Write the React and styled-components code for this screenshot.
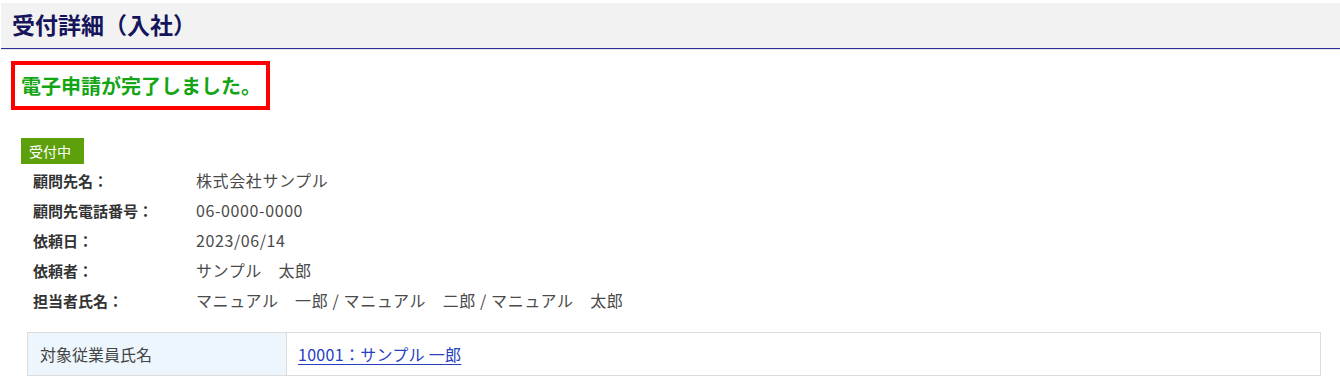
import { Fragment } from "react"
import styled, { createGlobalStyle } from "styled-components"

const GlobalStyle = createGlobalStyle`
  body {
    margin: 0;
    background: #fff;
    font-family: "Noto Sans CJK JP", "Noto Sans", sans-serif;
    color: #333;
  }
`

const details = [
  { label: "顧問先名：", value: "株式会社サンプル" },
  { label: "顧問先電話番号：", value: "06-0000-0000" },
  { label: "依頼日：", value: "2023/06/14" },
  { label: "依頼者：", value: "サンプル　太郎" },
  { label: "担当者氏名：", value: "マニュアル　一郎 / マニュアル　二郎 / マニュアル　太郎" },
]

const Page = styled.div`
  width: 1340px;
  padding-top: 3px;
`

const Header = styled.header`
  margin-left: 1px;
  height: 45px;
  background: #f2f2f2;
  border-bottom: 1px solid #2e2e96;
  box-shadow: 0 1px 0 #e4e4ef;
  display: flex;
  align-items: center;
  padding-left: 11px;
`

const Title = styled.h1`
  margin: 0;
  font-size: 23px;
  font-weight: 700;
  line-height: 1;
  color: #15155c;
  padding-bottom: 3px;
`

const Content = styled.main`
  padding: 12px 19px 0 11px;
`

const Notice = styled.div`
  display: inline-block;
  border: 4px solid #ff0000;
  padding: 0 5px 0 6px;
  height: 41px;
  line-height: 41px;
  font-size: 20px;
  font-weight: 700;
  color: #14a514;
`

const Status = styled.div`
  margin: 28px 0 0 10px;
`

const Badge = styled.span`
  display: inline-block;
  width: 63px;
  height: 26px;
  line-height: 26px;
  background: #5e9f0c;
  color: #fff;
  font-size: 14px;
  padding-left: 8px;
  box-sizing: border-box;
`

const DetailList = styled.dl`
  margin: 1px 0 0 22px;
  display: grid;
  grid-template-columns: 163px 1fr;
  grid-auto-rows: 30px;
  align-items: center;
`

const Term = styled.dt`
  font-size: 15px;
  font-weight: 700;
  color: #333;
`

const Desc = styled.dd`
  margin: 0;
  font-size: 16px;
  letter-spacing: 0.6px;
  color: #4a4a4a;
  white-space: pre;
`

const Table = styled.table`
  margin: 17px 0 0 16px;
  width: 1294px;
  border-collapse: collapse;
`

const HeadCell = styled.th`
  width: 259px;
  height: 43px;
  padding: 0 0 0 12px;
  text-align: left;
  font-weight: 400;
  font-size: 16px;
  color: #444;
  background: #edf5fd;
  border: 1px solid #dcdcdc;
  box-sizing: border-box;
`

const Cell = styled.td`
  padding: 0 0 0 11px;
  font-size: 16px;
  border: 1px solid #dcdcdc;
`

const Link = styled.a`
  color: #2840c0;
  text-decoration: underline;
  text-underline-offset: 3px;
  letter-spacing: 0.3px;
  cursor: pointer;
`

export default function App() {
  return (
    <Page>
      <GlobalStyle />
      <Header>
        <Title>受付詳細（入社）</Title>
      </Header>
      <Content>
        <Notice>電子申請が完了しました。</Notice>
        <Status>
          <Badge>受付中</Badge>
        </Status>
        <DetailList>
          {details.map((d) => (
            <Fragment key={d.label}>
              <Term>{d.label}</Term>
              <Desc>{d.value}</Desc>
            </Fragment>
          ))}
        </DetailList>
        <Table>
          <tbody>
            <tr>
              <HeadCell>対象従業員氏名</HeadCell>
              <Cell>
                <Link>10001：サンプル 一郎</Link>
              </Cell>
            </tr>
          </tbody>
        </Table>
      </Content>
    </Page>
  )
}
